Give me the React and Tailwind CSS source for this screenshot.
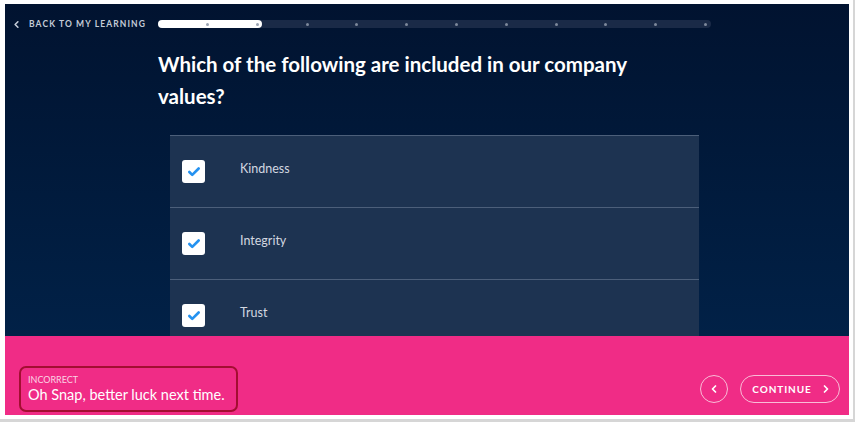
import { ChevronLeft, ChevronRight, Check } from 'lucide-react';

const options = ['Kindness', 'Integrity', 'Trust'];

const ProgressBar = () => {
    const dots = Array.from({ length: 11 });
    return (
        <div className="relative w-[553px] h-[8px] rounded-full bg-[#1a2a47]">
            <div className="absolute left-0 top-0 h-[8px] w-[104px] rounded-full bg-white"></div>
            <div className="absolute inset-0 flex items-center justify-between pl-[48px] pr-[4px]">
                {dots.map((_, i) => (
                    <span key={i} className={`w-[3px] h-[3px] rounded-full ${i < 2 ? 'bg-[#9aa3b2]' : 'bg-[#7e899c]'}`}></span>
                ))}
            </div>
        </div>
    );
};

const App = () => {
    return (
        <div className="w-[855px] h-[422px] bg-[#d6d6d6] pr-[2px] pb-[3px] font-['Lato',_'Liberation_Sans',_sans-serif]">
            <div className="w-[853px] h-[419px] bg-white pt-[4px] pl-[5px]">
                <div className="w-[844px] h-[411px] flex flex-col overflow-hidden">

                    {/* main quiz area */}
                    <div className="h-[332px] bg-gradient-to-b from-[#011330] to-[#012147] overflow-hidden">
                        <div className="flex items-center h-[8px] mt-[16px]">
                            <div className="w-[153px] flex items-center pl-[6px] text-[#c4ccd8] whitespace-nowrap">
                                <ChevronLeft size={11} strokeWidth={3.5} />
                                <span className="ml-[7px] text-[8.5px] font-bold tracking-[1.1px] leading-none">BACK TO MY LEARNING</span>
                            </div>
                            <ProgressBar />
                        </div>

                        <h1 className="ml-[153px] mt-[20px] w-[500px] text-[20.5px] leading-[32px] font-bold text-white">
                            Which of the following are included in our company values?
                        </h1>

                        <div className="ml-[165px] mt-[23px] w-[529px]">
                            {options.map((label) => (
                                <div key={label} className="h-[72px] bg-[#1d3351] border-t border-[#4c5f7a] flex items-center pl-[12px]">
                                    <span className="w-[23px] h-[23px] rounded-[3px] bg-white flex items-center justify-center text-[#2592f0]">
                                        <Check size={14} strokeWidth={4.5} />
                                    </span>
                                    <span className="ml-[35px] -mt-[5px] text-[12.5px] text-[#d3d8e0]">{label}</span>
                                </div>
                            ))}
                        </div>
                    </div>

                    {/* feedback bar */}
                    <div className="h-[79px] bg-[#f02c86] flex items-center justify-between pt-[26px] pl-[14px] pr-[9px]">
                        <div className="w-[219px] h-[46px] rounded-[7px] border-[2.5px] border-[#a30e31] pl-[7px] pt-[6px]">
                            <p className="text-[9px] leading-[11px] text-[#fbd3e4]">INCORRECT</p>
                            <p className="text-[14.5px] leading-[19px] text-white">Oh Snap, better luck next time.</p>
                        </div>
                        <div className="flex items-center gap-[12px]">
                            <button className="w-[28px] h-[28px] rounded-full border-[1.5px] border-[#f9bcd7] flex items-center justify-center text-white">
                                <ChevronLeft size={12} strokeWidth={3.5} />
                            </button>
                            <button className="w-[100px] h-[28px] rounded-full border-[1.5px] border-[#f9bcd7] flex items-center justify-center gap-[8px] text-white pl-[4px]">
                                <span className="text-[10px] font-bold tracking-[0.9px] leading-none">CONTINUE</span>
                                <ChevronRight size={12} strokeWidth={3.5} />
                            </button>
                        </div>
                    </div>

                </div>
            </div>
        </div>
    );
};

export default App;
